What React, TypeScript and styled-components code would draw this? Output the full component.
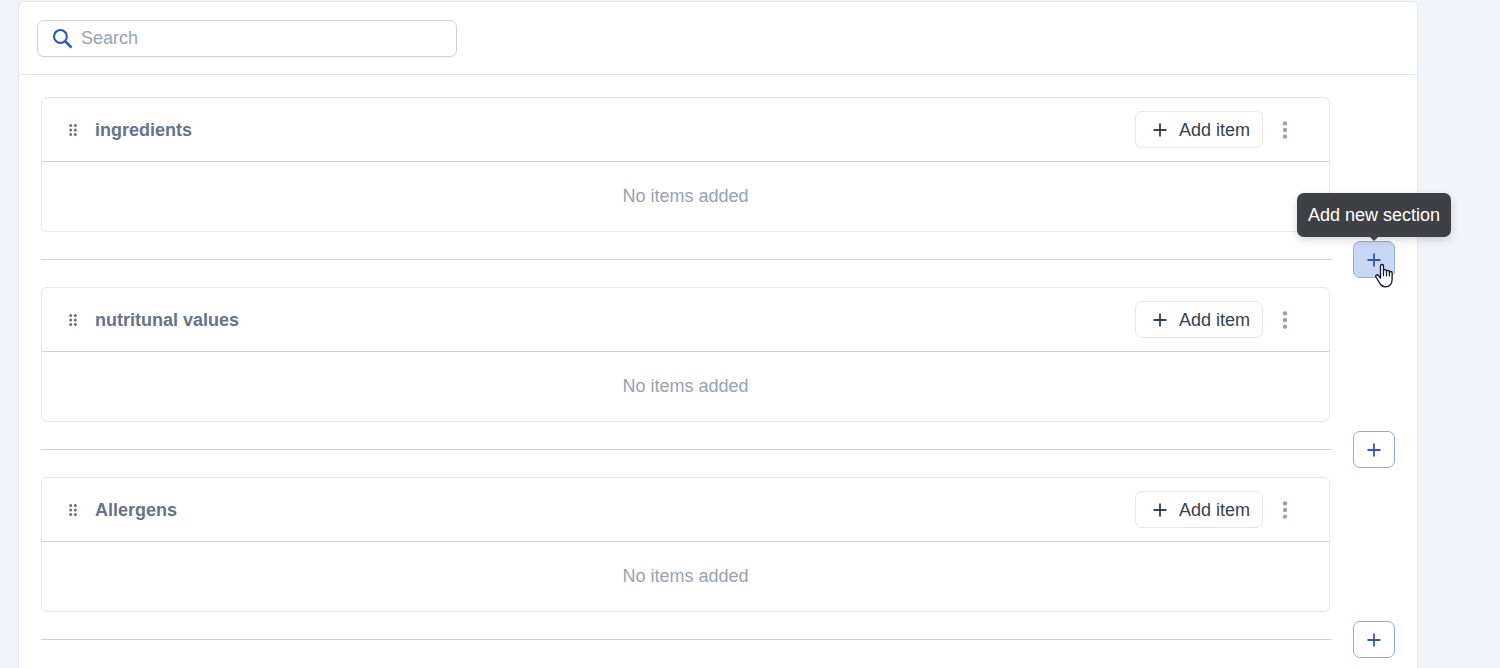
import React from "react";
import styled, { createGlobalStyle } from "styled-components";

const GlobalStyle = createGlobalStyle`
  *, *::before, *::after { box-sizing: border-box; }
  body {
    margin: 0;
    background: #f3f4f9;
    font-family: "Liberation Sans", Arial, sans-serif;
    font-size: 18px;
    line-height: 24px;
  }
  button, input { font: inherit; }
  button { cursor: pointer; }
  svg { display: block; flex: none; }
`;

const Page = styled.div`
  padding: 1px 82px 0 18px;
  overflow: hidden;
`;

const Panel = styled.main`
  background: #fff;
  border: 1px solid #e2e8f0;
  border-bottom: 0;
  border-radius: 6px 6px 0 0;
`;

const Toolbar = styled.header`
  padding: 18px;
  padding-bottom: 17px;
  border-bottom: 1px solid #e3e6f0;
`;

const SearchField = styled.label`
  display: flex;
  align-items: center;
  gap: 8px;
  width: 420px;
  max-width: 100%;
  height: 37px;
  padding: 0 14px;
  border: 1px solid #d1d3d6;
  border-radius: 7px;
  box-shadow: 0 1px 2px rgba(0, 0, 0, 0.06);
`;

const SearchInput = styled.input`
  flex: 1;
  min-width: 0;
  height: 24px;
  padding: 0 0 2px;
  border: 0;
  outline: 0;
  background: transparent;
  color: #334155;
  &::placeholder { color: #94a3b8; opacity: 1; }
`;

const SectionList = styled.div`
  padding: 22px;
`;

const Card = styled.section`
  margin-right: 65px;
  border: 1px solid #e3e6f0;
  border-radius: 6px;
`;

const CardHeader = styled.div`
  display: flex;
  align-items: center;
  gap: 10px;
  height: 64px;
  padding: 0 32px 0 19px;
  border-bottom: 1px solid #c8d5e1;
`;

const CardTitle = styled.h2`
  flex: 1;
  margin: 0;
  font-size: inherit;
  font-weight: 700;
  color: #64748b;
`;

const IconButton = styled.button<{ $color: string }>`
  display: flex;
  align-items: center;
  justify-content: center;
  width: 24px;
  height: 24px;
  padding: 0;
  border: 0;
  background: none;
  color: ${(p) => p.$color};
`;

const AddItemButton = styled.button`
  display: flex;
  align-items: center;
  gap: 12px;
  width: 128px;
  height: 37px;
  padding: 0 0 0 17px;
  border: 1px solid #e5e7eb;
  border-radius: 7px;
  background: #fff;
  color: #334155;
  white-space: nowrap;
`;

const EmptyText = styled.p`
  margin: 0;
  padding: 22px 0 23px;
  text-align: center;
  color: #94a3b8;
`;

const DividerRow = styled.div`
  display: flex;
  align-items: center;
  gap: 21px;
  padding: 9px 0;
`;

const Line = styled.hr`
  flex: 1;
  margin: 0;
  border: 0;
  border-top: 1px solid #c8d5e1;
`;

const AddSectionWrap = styled.div`
  position: relative;
`;

const AddSectionButton = styled.button<{ $active: boolean }>`
  display: flex;
  align-items: center;
  justify-content: center;
  width: 42px;
  height: 37px;
  padding: 0;
  border: 1px solid #8facea;
  border-radius: 7px;
  background: ${(p) => (p.$active ? "#c7d7f4" : "#fff")};
  color: #2f5bb7;
`;

const Tooltip = styled.div`
  position: absolute;
  bottom: calc(100% + 4px);
  left: 50%;
  transform: translateX(-50%);
  width: 154px;
  padding: 10px 0;
  border-radius: 7px;
  background: #3f4045;
  color: #fff;
  text-align: center;
  white-space: nowrap;
  box-shadow: 0 3px 8px rgba(0, 0, 0, 0.16);
  &::after {
    content: "";
    position: absolute;
    top: 100%;
    left: 50%;
    margin-left: -4px;
    border: 4px solid transparent;
    border-bottom: 0;
    border-top-color: #3f4045;
  }
`;

const Pointer = styled.svg`
  position: absolute;
  top: 22px;
  left: 21px;
  pointer-events: none;
`;

const SearchIcon = () => (
  <svg width="21" height="21" viewBox="0 0 21 21" fill="none" stroke="#2f5bb7" strokeWidth="2.2" aria-hidden="true">
    <circle cx="8.4" cy="8.4" r="6.4" />
    <path d="M13 13 19.6 19.6" strokeWidth="2.6" />
  </svg>
);

const PlusIcon = () => (
  <svg width="14" height="14" viewBox="0 0 14 14" stroke="currentColor" strokeWidth="1.8" aria-hidden="true">
    <path d="M7 .5v13M.5 7h13" />
  </svg>
);

const DragIcon = () => (
  <svg width="8" height="12" viewBox="0 0 8 12" fill="currentColor" aria-hidden="true">
    {[1.5, 6, 10.5].map((y) => (
      <React.Fragment key={y}>
        <circle cx="1.7" cy={y} r="1.5" />
        <circle cx="6.3" cy={y} r="1.5" />
      </React.Fragment>
    ))}
  </svg>
);

const KebabIcon = () => (
  <svg width="6" height="18" viewBox="0 0 6 18" fill="currentColor" aria-hidden="true">
    <circle cx="3" cy="2.4" r="2.2" />
    <circle cx="3" cy="9" r="2.2" />
    <circle cx="3" cy="15.6" r="2.2" />
  </svg>
);

const HandPointer = () => (
  <Pointer width="20" height="25" viewBox="0 0 20 25" aria-hidden="true">
    <path
      d="M6.5 15V3.2c0-1 .6-1.7 1.5-1.7s1.5.7 1.5 1.7V8c0-.8.6-1.3 1.5-1.3s1.5.5 1.5 1.4v.6c0-.9.5-1.3 1.4-1.3s1.5.5 1.5 1.4v.8c.1-.7.6-1.1 1.3-1.1.9 0 1.4.6 1.4 1.5v6.5c0 4.3-2.5 7.3-6.7 7.3-3 0-4.3-1.3-5.4-3.2l-4-6.6c-.5-.8-.4-1.6.3-2 .7-.5 1.6-.2 2.2.5z"
      fill="#fff"
      stroke="#111827"
      strokeWidth="1.3"
      strokeLinejoin="round"
    />
    <path d="M9.5 8v4.6M12.5 8.7v4.1M15.4 9.6v3.4" fill="none" stroke="#111827" strokeWidth="1.2" strokeLinecap="round" />
  </Pointer>
);

const sections = ["ingredients", "nutritunal values", "Allergens"];

export default function App() {
  return (
    <>
      <GlobalStyle />
      <Page>
        <Panel>
          <Toolbar>
            <SearchField>
              <SearchIcon />
              <SearchInput type="search" placeholder="Search" aria-label="Search" />
            </SearchField>
          </Toolbar>
          <SectionList>
            {sections.map((title, index) => (
              <React.Fragment key={title}>
                <Card>
                  <CardHeader>
                    <IconButton $color="#64748b" aria-label={`Move ${title}`}>
                      <DragIcon />
                    </IconButton>
                    <CardTitle>{title}</CardTitle>
                    <AddItemButton>
                      <PlusIcon />
                      Add item
                    </AddItemButton>
                    <IconButton $color="#94a3b8" aria-label={`Options for ${title}`}>
                      <KebabIcon />
                    </IconButton>
                  </CardHeader>
                  <EmptyText>No items added</EmptyText>
                </Card>
                <DividerRow>
                  <Line />
                  <AddSectionWrap>
                    <AddSectionButton $active={index === 0} aria-label="Add new section">
                      <PlusIcon />
                    </AddSectionButton>
                    {index === 0 && (
                      <>
                        <Tooltip role="tooltip">Add new section</Tooltip>
                        <HandPointer />
                      </>
                    )}
                  </AddSectionWrap>
                </DividerRow>
              </React.Fragment>
            ))}
          </SectionList>
        </Panel>
      </Page>
    </>
  );
}
